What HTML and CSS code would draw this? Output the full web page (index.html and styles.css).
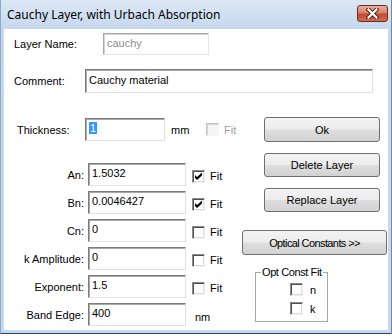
FILE: index.html
```html
<!DOCTYPE html>
<html lang="en">
<head>
    <meta charset="UTF-8">
    <title>Cauchy Layer, with Urbach Absorption</title>
    <link rel="stylesheet" href="styles.css">
</head>
<body>
    <div class="window">
        <div class="titlebar">
            <span class="title">Cauchy Layer, with Urbach Absorption</span>
            <button class="close">
                <svg width="13" height="11" viewBox="0 0 13 11">
                    <path d="M2.5 1.5 L10.5 9.5 M10.5 1.5 L2.5 9.5" stroke="#5a2418" stroke-width="4.2" stroke-linecap="square"/>
                    <path d="M2.5 1.5 L10.5 9.5 M10.5 1.5 L2.5 9.5" stroke="#fff" stroke-width="2.2" stroke-linecap="square"/>
                </svg>
            </button>
        </div>
        <div class="frame">
            <div class="client">
                <div class="row name-row">
                    <span class="lbl">Layer Name:</span>
                    <div class="field name-field disabled">cauchy</div>
                </div>
                <div class="row comment-row">
                    <span class="lbl">Comment:</span>
                    <div class="field comment-field">Cauchy material</div>
                </div>

                <div class="main">
                    <div class="left">
                        <div class="row thick-row">
                            <span class="thick-lbl">Thickness:</span>
                            <div class="field thick-field"><span class="sel">1</span></div>
                            <span class="unit">mm</span>
                            <span class="check disabled"></span>
                            <span class="fit disabled">Fit</span>
                        </div>

                        <div class="params">
                            <div class="row param">
                                <span class="plbl">An:</span>
                                <div class="field pfield">1.5032</div>
                                <span class="check"><svg width="11" height="11" viewBox="0 0 11 11"><polygon points="2,4 4,6 9,1.5 9,4.5 4,9 2,7"/></svg></span>
                                <span class="fit">Fit</span>
                            </div>
                            <div class="row param">
                                <span class="plbl">Bn:</span>
                                <div class="field pfield">0.0046427</div>
                                <span class="check"><svg width="11" height="11" viewBox="0 0 11 11"><polygon points="2,4 4,6 9,1.5 9,4.5 4,9 2,7"/></svg></span>
                                <span class="fit">Fit</span>
                            </div>
                            <div class="row param">
                                <span class="plbl">Cn:</span>
                                <div class="field pfield">0</div>
                                <span class="check"></span>
                                <span class="fit">Fit</span>
                            </div>
                            <div class="row param">
                                <span class="plbl">k Amplitude:</span>
                                <div class="field pfield">0</div>
                                <span class="check"></span>
                                <span class="fit">Fit</span>
                            </div>
                            <div class="row param">
                                <span class="plbl">Exponent:</span>
                                <div class="field pfield">1.5</div>
                                <span class="check"></span>
                                <span class="fit">Fit</span>
                            </div>
                            <div class="row param">
                                <span class="plbl">Band Edge:</span>
                                <div class="field pfield">400</div>
                                <span class="nm">nm</span>
                            </div>
                        </div>
                    </div>

                    <div class="right">
                        <button class="btn ok">Ok</button>
                        <button class="btn del">Delete Layer</button>
                        <button class="btn rep">Replace Layer</button>
                        <button class="btn opt">Optical Constants &gt;&gt;</button>
                        <fieldset class="group">
                            <legend>Opt Const Fit</legend>
                            <div class="gitem"><span class="check"></span><span class="glbl">n</span></div>
                            <div class="gitem"><span class="check"></span><span class="glbl">k</span></div>
                        </fieldset>
                    </div>
                </div>
            </div>
        </div>
    </div>
</body>
</html>
```

FILE: styles.css
```css
* { box-sizing: border-box; }
body {
    margin: 0;
    background: #fff;
    font-family: 'Liberation Sans', Arial, sans-serif;
    font-size: 11px;
    color: #000;
}
.window {
    width: 392px;
    height: 334px;
}
.titlebar {
    height: 29px;
    display: flex;
    align-items: center;
    justify-content: space-between;
    background: linear-gradient(#dce7f4, #c6d8ee);
    border-left: 1px solid #8ea8c7;
    border-right: 1px solid #6f88a8;
    padding-left: 6px;
}
.title {
    font-family: 'Noto Sans', sans-serif;
    font-size: 12px;
}
.close {
    width: 31px;
    height: 17px;
    margin: -3px 3px 0 0;
    padding: 0;
    border: 1px solid #6e2a1d;
    border-radius: 3px;
    background: linear-gradient(#e8b0a2, #d98068 45%, #c44a30 55%, #cf6d50);
    display: flex;
    align-items: center;
    justify-content: center;
}
.frame {
    height: 305px;
    background: #c6d8ee;
    padding: 0 3px 3px 3px;
    border-left: 1px solid #8ea8c7;
    border-right: 1px solid #6f88a8;
    border-bottom: 1px solid #34465e;
}
.client {
    height: 301px;
    background: #fff;
    padding-top: 4px;
}
.row {
    display: flex;
    align-items: center;
}
.field {
    border: 1px solid;
    border-color: #7c7c7c #e2e2e2 #e2e2e2 #7c7c7c;
    box-shadow: inset 1px 1px 0 #a8a8a8;
    background: #fff;
    padding: 2px 0 0 3px;
    line-height: 14px;
    white-space: nowrap;
}
.field.disabled {
    border-color: #a8a8a8 #e6e6e6 #e6e6e6 #a8a8a8;
    box-shadow: inset 1px 1px 0 #d4d4d4;
    color: #8d8d8d;
}

.name-row { height: 22px; padding-left: 10px; }
.name-row .lbl { width: 89px; }
.name-field { width: 106px; height: 22px; }
.comment-row { height: 24px; margin-top: 14px; padding-left: 10px; }
.comment-row .lbl { width: 71px; }
.comment-field { width: 288px; height: 24px; padding-top: 3px; }

.main {
    display: flex;
    margin-top: 24px;
}
.left { width: 238px; }
.thick-row { height: 23px; margin-top: 1px; padding-left: 13px; }
.thick-lbl { width: 68px; }
.thick-field { width: 80px; height: 23px; }
.sel {
    background: #3399ff;
    color: #fff;
    padding: 0 1px;
}
.unit { width: 35px; margin-left: 6px; }
.fit { margin-left: 5px; }
.fit.disabled { color: #a0a0a0; }

.params {
    display: flex;
    flex-direction: column;
    gap: 5px;
    margin-top: 22px;
}
.param { height: 23px; }
.plbl { width: 80px; text-align: right; }
.pfield { width: 98px; height: 23px; margin-left: 4px; }
.param .check { margin-left: 6px; margin-top: 3px; }
.param .fit { margin-top: 3px; }
.nm { margin-left: 9px; margin-top: 4px; }

.check {
    width: 13px;
    height: 13px;
    flex: none;
    border: 1px solid;
    border-color: #8a8a8a #f0f0f0 #f0f0f0 #8a8a8a;
    box-shadow: inset 1px 1px 0 #505050, inset -1px -1px 0 #dcdcdc;
    background: #fff;
    display: flex;
}
.check svg { fill: #000; }
.check.disabled {
    border-color: #c4c4c4 #f4f4f4 #f4f4f4 #c4c4c4;
    box-shadow: inset 1px 1px 0 #d8d8d8;
    background: #f6f6f6;
}

.right {
    display: flex;
    flex-direction: column;
    align-items: flex-start;
}
.btn {
    font: inherit;
    color: #000;
    padding: 0;
    border: 1px solid #707070;
    border-radius: 3px;
    background: linear-gradient(#f3f3f3 0%, #ececec 48%, #dedede 52%, #d2d2d2 100%);
}
.ok { margin-left: 22px; width: 116px; height: 25px; }
.del { margin: 11px 0 0 22px; width: 116px; height: 24px; }
.rep { margin: 11px 0 0 22px; width: 116px; height: 24px; }
.opt { margin-top: 18px; width: 145px; height: 25px; letter-spacing: -0.6px; }

.group {
    margin: 11px 0 0 13px;
    width: 73px;
    height: 56px;
    padding: 1px 0 0 0;
    border: 1px solid #a6a6a6;
    min-inline-size: 0;
}
.group legend {
    margin-left: 5px;
    padding: 0 1px;
    line-height: 13px;
    white-space: nowrap;
    letter-spacing: -0.4px;
}
.gitem {
    display: flex;
    align-items: center;
    height: 19px;
    padding-left: 34px;
}
.glbl { margin-left: 7px; }
```
